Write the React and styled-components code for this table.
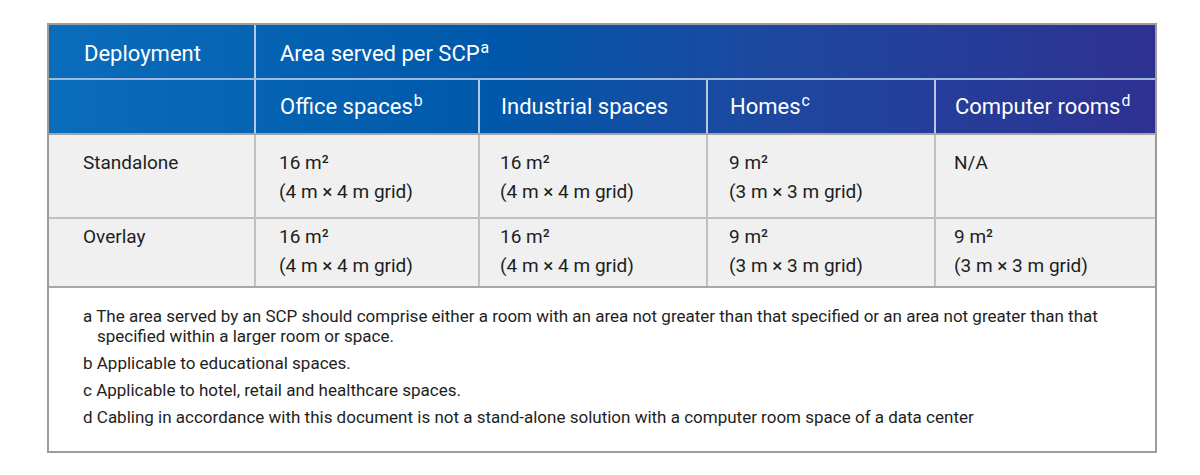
import React from "react";
import styled, { createGlobalStyle } from "styled-components";

const Global = createGlobalStyle`
  html, body { margin: 0; padding: 0; background: #ffffff; }
  body { font-family: Roboto, "Liberation Sans", sans-serif; color: #1e1e1e; }
`;

const COLS = "205px 224px 228px 228px 221px";
const PADS = [35, 24, 21, 22, 19];

const Page = styled.div`
  padding: 23px 0 0 47px;
`;

const Frame = styled.div`
  width: 1110px;
  box-sizing: border-box;
  border: 2px solid #9c9c9c;
  background: #ffffff;
`;

const Head = styled.div`
  background: linear-gradient(90deg, #0a6dbb 0%, #0058aa 40%, #1d48a0 65%, #2e3191 100%);
  color: #ffffff;
  font-size: 22px;
  border-bottom: 2px solid #a3a3a3;
`;

const HeadRow = styled.div`
  display: grid;
  grid-template-columns: ${COLS};
  height: ${(p) => p.$h}px;
  border-bottom: ${(p) => (p.$line ? "2px solid #9fb8de" : "none")};
`;

const HeadCell = styled.div`
  display: flex;
  align-items: center;
  padding-left: ${(p) => p.$pl}px;
  padding-top: ${(p) => p.$pt}px;
  border-left: ${(p) => (p.$first ? "none" : "2px solid #b6c8e6")};
  grid-column: ${(p) => p.$span || "auto"};
  white-space: nowrap;
`;

const Sup = styled.sup`
  font-size: 0.72em;
  line-height: 1;
  vertical-align: top;
  position: relative;
  top: -6px;
  margin-left: 1px;
`;

const BodyRow = styled.div`
  display: grid;
  grid-template-columns: ${COLS};
  background: #f0f0f0;
  height: ${(p) => p.$h}px;
  border-bottom: 2px solid ${(p) => (p.$last ? "#a8a8a8" : "#c0c0c0")};
  font-size: 19px;
  line-height: 29px;
`;

const Cell = styled.div`
  padding-left: ${(p) => p.$pl}px;
  padding-top: ${(p) => p.$pt}px;
  border-left: ${(p) => (p.$first ? "none" : "2px solid #c0c0c0")};
  white-space: nowrap;
`;

const Notes = styled.div`
  padding: 18px 40px 24px 34px;
  font-size: 17px;
  line-height: 20px;
`;

const Note = styled.p`
  margin: 0 0 7px 0;
  padding-left: 14px;
  text-indent: -14px;
  &:last-child { margin-bottom: 0; }
`;

const rows = [
  {
    name: "Standalone",
    h: 82,
    pt: 13,
    cells: [
      ["16 m²", "(4 m × 4 m grid)"],
      ["16 m²", "(4 m × 4 m grid)"],
      ["9 m²", "(3 m × 3 m grid)"],
      ["N/A"],
    ],
  },
  {
    name: "Overlay",
    h: 67,
    pt: 3,
    cells: [
      ["16 m²", "(4 m × 4 m grid)"],
      ["16 m²", "(4 m × 4 m grid)"],
      ["9 m²", "(3 m × 3 m grid)"],
      ["9 m²", "(3 m × 3 m grid)"],
    ],
  },
];

const heads = [
  ["Office spaces", "b"],
  ["Industrial spaces", null],
  ["Homes", "c"],
  ["Computer rooms", "d"],
];

const notes = [
  ["a", "The area served by an SCP should comprise either a room with an area not greater than that specified or an area not greater than that specified within a larger room or space."],
  ["b", "Applicable to educational spaces."],
  ["c", "Applicable to hotel, retail and healthcare spaces."],
  ["d", "Cabling in accordance with this document is not a stand-alone solution with a computer room space of a data center"],
];

export default function App() {
  return (
    <Page>
      <Global />
      <Frame>
        <Head>
          <HeadRow $h={53} $line>
            <HeadCell $first $pl={PADS[0]} $pt={4}>Deployment</HeadCell>
            <HeadCell $span="2 / 6" $pl={PADS[1]} $pt={4}>
              Area served per SCP<Sup>a</Sup>
            </HeadCell>
          </HeadRow>
          <HeadRow $h={53}>
            <HeadCell $first $pl={PADS[0]} $pt={0} />
            {heads.map(([t, s], j) => (
              <HeadCell key={t} $pl={PADS[j + 1]} $pt={0}>
                {t}
                {s && <Sup>{s}</Sup>}
              </HeadCell>
            ))}
          </HeadRow>
        </Head>
        {rows.map((r, i) => (
          <BodyRow key={r.name} $h={r.h} $last={i === rows.length - 1}>
            <Cell $first $pl={PADS[0] - 1} $pt={r.pt}>{r.name}</Cell>
            {r.cells.map((c, j) => (
              <Cell key={j} $pl={PADS[j + 1] - 1} $pt={r.pt}>
                {c.map((line, k) => (
                  <div key={k}>{line}</div>
                ))}
              </Cell>
            ))}
          </BodyRow>
        ))}
        <Notes>
          {notes.map(([k, t]) => (
            <Note key={k}>
              {k} {t}
            </Note>
          ))}
        </Notes>
      </Frame>
    </Page>
  );
}
